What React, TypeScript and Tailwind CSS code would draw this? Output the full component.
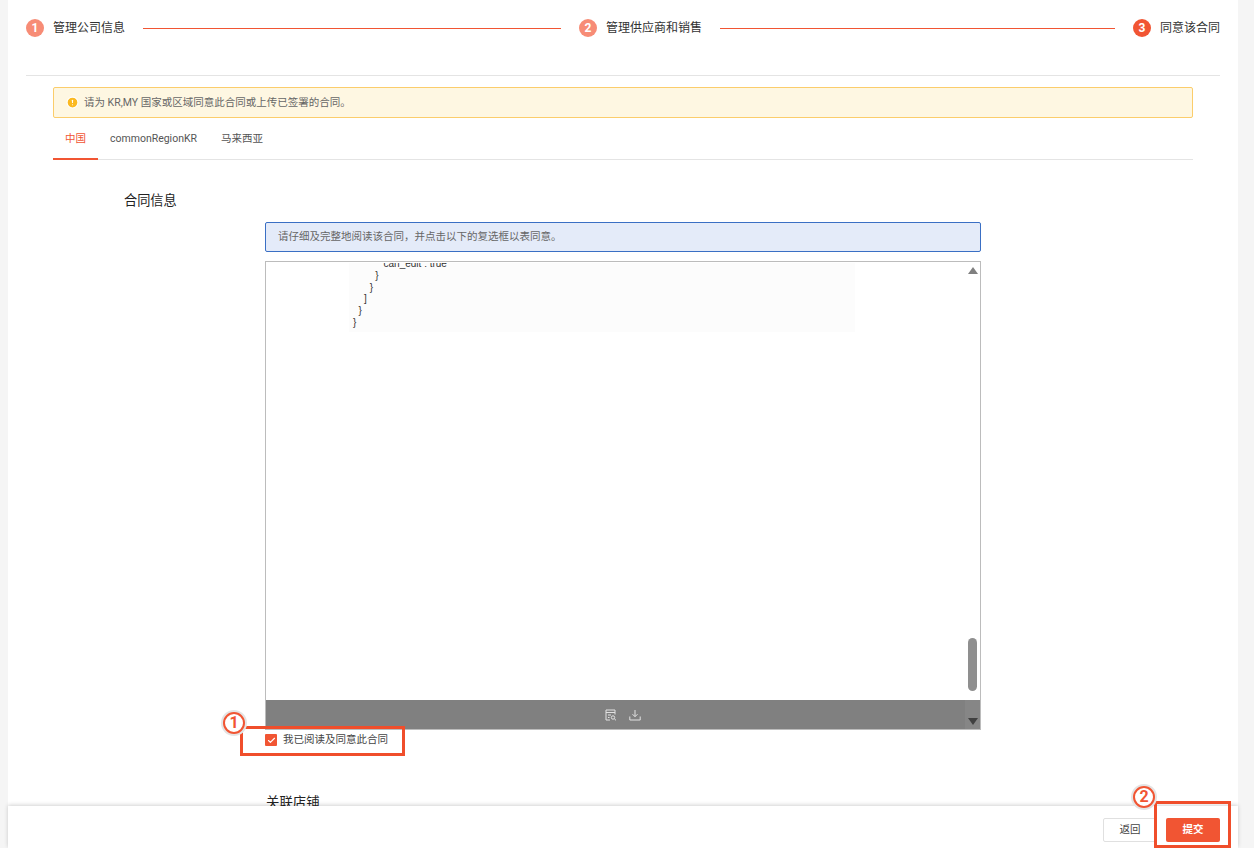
// Contract agreement step of the seller onboarding flow
import { AlertCircle, Check } from "lucide-react";

const font = "[font-family:Roboto,'Noto_Sans_CJK_SC',sans-serif]";

const codeLines = `           can_edit : true
        }
      }
    ]
  }
}`;

// Step header item
const Step = ({ num, label, active }: { num: number; label: string; active?: boolean }) => (
  <div className="flex items-center shrink-0">
    <span
      className={`w-[18px] h-[18px] rounded-full flex items-center justify-center text-white text-[12px] font-bold ${
        active ? "bg-[#f15533]" : "bg-[#f78c76]"
      }`}
    >
      {num}
    </span>
    <span className="ml-[9px] text-[12px] leading-[18px] text-[#333333]">{label}</span>
  </div>
);

// Red numbered callout drawn over the screenshot
const Callout = ({ num, className }: { num: number; className: string }) => (
  <div
    className={`absolute w-[22px] h-[22px] rounded-full border-2 border-[#f15533] bg-white flex items-center justify-center text-[#f15533] text-[16px] font-bold leading-none shadow-[0_0_0_2px_#e4e4e4] ${className}`}
  >
    {num}
  </div>
);

const App = () => {
  return (
    <div className={`relative h-[848px] overflow-hidden bg-[#f5f5f5] pl-2 pr-4 ${font}`}>
      <main className="h-full bg-white px-[18px]">
        {/* ---- Steps ---- */}
        <div className="h-[76px] border-b border-[#e4e4e4] pt-[19px]">
          <div className="flex items-center">
            <Step num={1} label="管理公司信息" />
            <div className="w-[418px] shrink-0 h-px bg-[#f15533] mx-[18px]" />
            <Step num={2} label="管理供应商和销售" />
            <div className="flex-1 h-px bg-[#f15533] mx-[18px]" />
            <Step num={3} label="同意该合同" active />
          </div>
        </div>

        <div className="px-[27px] pt-[11px]">
          {/* ---- Warning ---- */}
          <div className="h-[31px] flex items-center rounded-[2px] border border-[#fbcd6b] bg-[#fef7e2] pl-[12px] text-[10.5px] text-[#666666]">
            <AlertCircle className="w-[13px] h-[13px] fill-[#fbb921] text-white" />
            <span className="ml-[5px]">请为 KR,MY 国家或区域同意此合同或上传已签署的合同。</span>
          </div>

          {/* ---- Region tabs ---- */}
          <div className="h-[42px] flex border-b border-[#e4e4e4] text-[10.5px] text-[#555555]">
            <div className="h-[42px] w-[45px] border-b-2 border-[#f15533] text-center leading-[41px] text-[#f15533]">
              中国
            </div>
            <div className="ml-3 leading-[41px]">commonRegionKR</div>
            <div className="ml-6 leading-[41px]">马来西亚</div>
          </div>

          {/* ---- Contract section ---- */}
          <h2 className="mt-[32px] ml-[71px] text-[13.2px] leading-[18px] font-normal text-[#222222]">合同信息</h2>

          <div className="relative mt-[12px] ml-[212px] w-[716px]">
            <div className="h-[30px] flex items-center rounded-[2px] border border-[#3a6fc4] bg-[#e4ebf9] pl-[12px] text-[10.5px] text-[#666666]">
              请仔细及完整地阅读该合同，并点击以下的复选框以表同意。
            </div>

            {/* Contract viewer */}
            <div className="relative mt-[9px] h-[469px] border border-[#bcbcbc] flex flex-col overflow-hidden">
              <div className="flex-1 overflow-hidden">
                <pre className="ml-[83px] w-[506px] h-[69px] mt-px overflow-hidden bg-[#fcfcfc] pl-[4px] text-[10px] leading-[11.8px] text-[#333333]">
                  <code className="block -mt-[5px] [font-family:'Liberation_Sans',sans-serif]">{codeLines}</code>
                </pre>
              </div>
              <div className="h-[29px] bg-[#808080] flex items-center justify-center gap-[12px]">
                <svg width="12" height="12" viewBox="0 0 12 12" fill="none" stroke="#e2e2e2" strokeWidth="1">
                  <path d="M5 11H1V1h9v4.5M1 3.5h9M3 6h3M3 8.5h1.5" />
                  <circle cx="8" cy="8.5" r="1.7" />
                  <path d="M9.3 9.8 11 11.3" />
                </svg>
                <svg width="12" height="12" viewBox="0 0 12 12" fill="none" stroke="#e2e2e2" strokeWidth="1">
                  <path d="M6 1v6.5M3.5 5.2 6 7.7l2.5-2.5M.8 7.5v3.5h10.4V7.5" />
                </svg>
              </div>

              {/* Scrollbar */}
              <div className="absolute right-0 top-0 bottom-0 w-[15px] bg-white/5 flex flex-col items-center pt-[5px] pb-[4px]">
                <div className="w-0 h-0 border-x-[5px] border-x-transparent border-b-[7px] border-b-[#808080]" />
                <div className="mt-auto mb-[6px] w-[9px] h-[53px] rounded-full bg-[#8f8f8f]" />
                <div className="mt-[21px] w-0 h-0 border-x-[5px] border-x-transparent border-t-[7px] border-t-[#404040]" />
              </div>
            </div>

            {/* Agreement checkbox */}
            <label className="mt-[4px] flex items-center h-[12px]">
              <span className="w-3 h-3 rounded-[1px] bg-[#f15533] flex items-center justify-center">
                <Check className="w-[9px] h-[9px] text-white" strokeWidth={3} />
              </span>
              <span className="ml-[6px] text-[10.5px] text-[#444444]">我已阅读及同意此合同</span>
            </label>

            <h2 className="mt-[48px] ml-px text-[13.4px] leading-[18px] font-normal text-[#222222]">关联店铺</h2>
          </div>
        </div>
      </main>

      {/* ---- Footer actions ---- */}
      <footer className="absolute left-2 bottom-0 w-[1230px] h-[42px] bg-white shadow-[0_-1px_4px_rgba(0,0,0,0.18)] flex items-start justify-end gap-[9px] pt-[12px] pr-[18px]">
        <button className="w-[54px] h-6 rounded-[2px] border border-[#e0e0e0] bg-white text-[10.5px] text-[#444444]">
          返回
        </button>
        <button className="w-[54px] h-6 rounded-[2px] bg-[#f15533] text-[10.5px] font-bold text-white">提交</button>
      </footer>

      {/* ---- Tutorial annotations ---- */}
      <div className="absolute left-[240px] top-[726px] w-[165px] h-[30px] border-[3px] border-[#f04e2b]" />
      <div className="absolute left-[1154px] top-[801px] w-[77px] h-[47px] border-[3px] border-[#f04e2b]" />
      <Callout num={1} className="left-[223px] top-[712px]" />
      <Callout num={2} className="left-[1133px] top-[786px]" />
    </div>
  );
};

export default App;
